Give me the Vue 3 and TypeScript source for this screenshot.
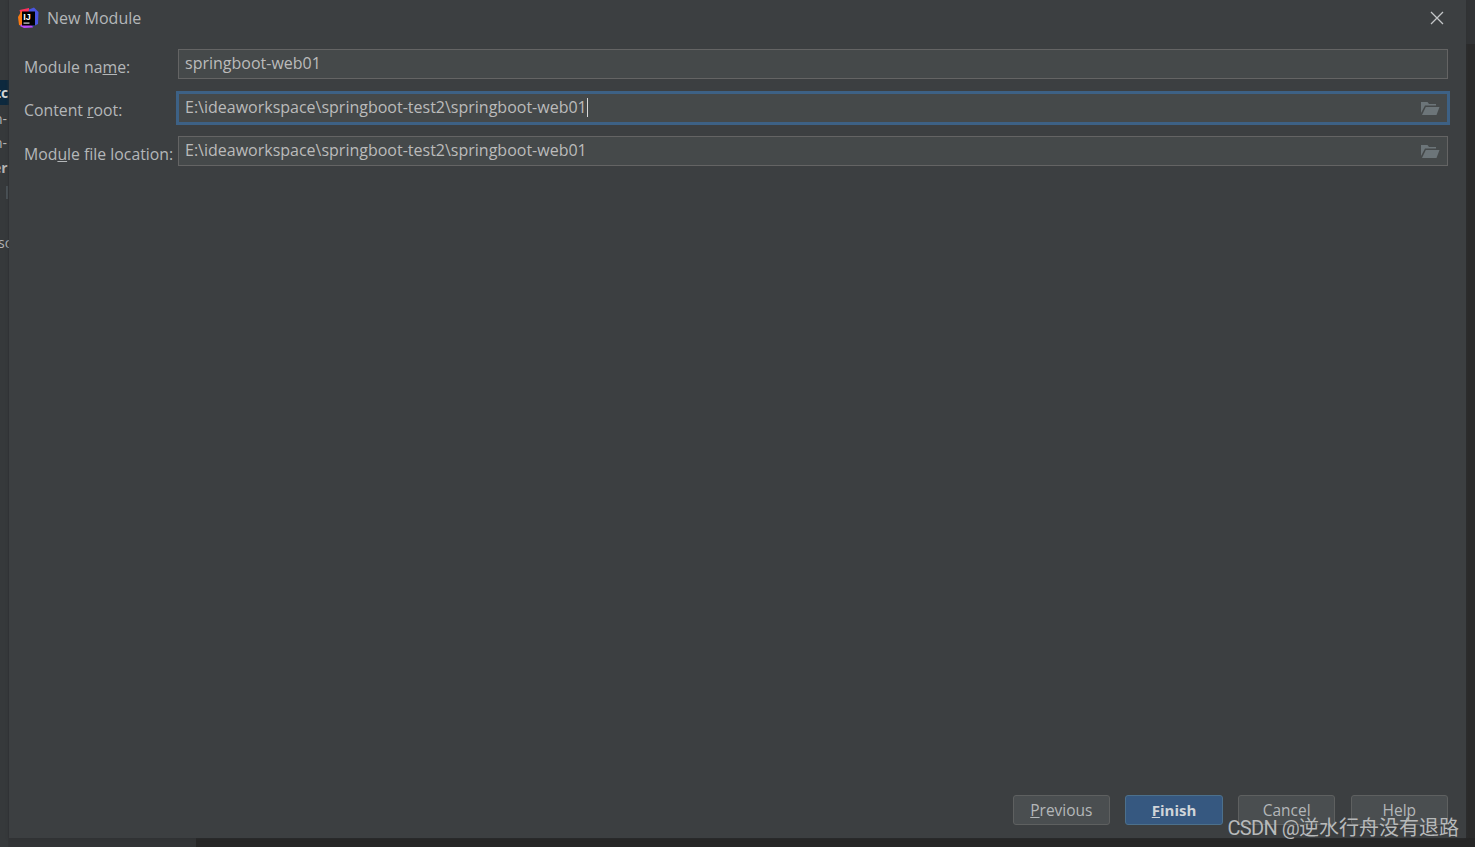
<template>
  <div class="screen">
    <!-- IDE window peeking out behind the dialog -->
    <div class="side-left">
      <div class="peek-selected">tc</div>
      <div class="peek peek-a">n-</div>
      <div class="peek peek-b">n-</div>
      <div class="peek peek-c">er</div>
      <div class="peek-tick"></div>
      <div class="peek peek-d">sc</div>
    </div>

    <div class="middle">
      <section class="dialog">
        <header class="title-bar">
          <svg class="app-logo" width="22" height="22" viewBox="0 0 22 22">
            <path d="M2.500 3 L12 1 L12 9 L5 12 Z" fill="#fe315d" />
            <path d="M1 10 L4.500 4 L9 8 L5 19 L2 18 Z" fill="#f97a12" />
            <path d="M12 2.5 L17 0.500 L21.500 5 L21 17 L15 20 L10 12 Z" fill="#4a55e0" />
            <path d="M3 19 L10 12 L16 20.500 L7 21 Z" fill="#b74af7" />
            <rect x="5" y="4.500" width="13" height="14" fill="#000" />
            <rect x="6.500" y="15.500" width="6" height="1.200" fill="#d8d8d8" />
            <text x="6.300" y="12.500" class="logo-text">IJ</text>
          </svg>
          <span class="title">New Module</span>
          <button class="close" aria-label="Close">
            <svg width="14" height="14" viewBox="0 0 14 14">
              <path d="M1 1 L13 13 M13 1 L1 13" stroke="#c4c6c8" stroke-width="1.300" fill="none" />
            </svg>
          </button>
        </header>

        <form class="fields" @submit.prevent>
          <div v-for="field in fields" :key="field.id" class="row" :class="field.id">
            <label class="label">
              {{ field.before }}<u>{{ field.mnemonic }}</u>{{ field.after }}
            </label>
            <div class="input" :class="{ focused: field.focused }">
              <span class="value">{{ field.value }}</span>
              <span v-if="field.focused" class="caret"></span>
              <svg v-if="field.browse" class="folder" width="20" height="16" viewBox="0 0 20 16">
                <path d="M1 13 V2 H7.500 L9 4 H16 V5.500 H5 L1 13 Z" fill="#6c7579" />
                <path d="M2 15 L5.800 7 H19.500 L16.500 15 Z" fill="#6c7579" />
              </svg>
            </div>
          </div>
        </form>

        <footer class="buttons">
          <button class="btn">
            <u>P</u>revious
          </button>
          <button class="btn primary">
            <u>F</u>inish
          </button>
          <button class="btn">Cancel</button>
          <button class="btn">Help</button>
        </footer>
      </section>

      <div class="side-right">
        <div class="side-right-top"></div>
      </div>
    </div>

    <div class="bottom-strip">
      <div class="bottom-light"></div>
    </div>

    <div class="watermark"><span class="mark-latin">CSDN @</span>逆水行舟没有退路</div>
  </div>
</template>

<script setup lang="ts">
type Field = {
  id: string;
  before: string;
  mnemonic: string;
  after: string;
  value: string;
  focused?: boolean;
  browse?: boolean;
};

const fields: Field[] = [
  {
    id: "name",
    before: "Module na",
    mnemonic: "m",
    after: "e:",
    value: "springboot-web01",
  },
  {
    id: "root",
    before: "Content ",
    mnemonic: "r",
    after: "oot:",
    value: "E:\\ideaworkspace\\springboot-test2\\springboot-web01",
    focused: true,
    browse: true,
  },
  {
    id: "file",
    before: "Mod",
    mnemonic: "u",
    after: "le file location:",
    value: "E:\\ideaworkspace\\springboot-test2\\springboot-web01",
    browse: true,
  },
];
</script>

<style>
html,
body {
  margin: 0;
  background: #333537;
  overflow: hidden;
}
</style>

<style scoped>
.screen {
  position: relative;
  display: grid;
  grid-template-columns: 9px 1fr;
  grid-template-rows: 838px 9px;
  width: 1475px;
  height: 847px;
  overflow: hidden;
  font-family: "Open Sans", "Noto Sans", sans-serif;
  color: #bbbbbb;
}

.side-left {
  grid-row: 1 / 3;
  background: #36393b;
  overflow: hidden;
  font-size: 14px;
  line-height: 18px;
  white-space: nowrap;
  box-shadow: inset -1px 0 0 #333537;
}

.peek-selected {
  margin-top: 80px;
  height: 25px;
  padding-top: 4px;
  box-sizing: border-box;
  background: #0d293e;
  color: #d6d6d6;
  font-weight: 700;
  text-indent: -5px;
}

.peek {
  color: #b4b4b4;
  text-indent: -6px;
  height: 18px;
}

.peek-a {
  margin-top: 5px;
}

.peek-b {
  margin-top: 6px;
}

.peek-c {
  margin-top: 7px;
  font-weight: 700;
  text-indent: -7px;
}

.peek-tick {
  width: 2px;
  height: 13px;
  margin: 9px 0 0 6px;
  background: #4b5358;
}

.peek-d {
  margin-top: 35px;
  text-indent: -2px;
}

.middle {
  display: flex;
  min-width: 0;
}

.dialog {
  position: relative;
  display: flex;
  flex-direction: column;
  flex: 1;
  min-width: 0;
  background: #3c3f41;
  box-shadow: 0 0 3px #2f3133;
}

.side-right {
  width: 9px;
  background: #2b2b2b;
}

.side-right-top {
  height: 44px;
  background: #323436;
}

.title-bar {
  display: flex;
  align-items: center;
  height: 36px;
  padding-left: 8px;
}

.app-logo {
  flex: none;
  margin-right: 8px;
}

.logo-text {
  font-family: "Liberation Sans", sans-serif;
  font-size: 9px;
  font-weight: 700;
  fill: #fff;
}

.title {
  font-size: 16px;
  color: #b4b7b9;
}

.close {
  display: flex;
  margin-left: auto;
  margin-right: 22px;
  padding: 0;
  border: 0;
  background: none;
}

.fields {
  display: flex;
  flex-direction: column;
  padding: 13px 18px 0 15px;
  gap: 14px;
}

.row {
  display: grid;
  grid-template-columns: 154px 1fr;
  align-items: center;
  height: 30px;
}

.row.file {
  margin-top: -1px;
}

.label {
  font-size: 15.8px;
  padding-top: 5px;
  color: #b4b7b9;
  white-space: nowrap;
}

.row.root .label {
  padding-top: 4px;
}

.input {
  position: relative;
  display: flex;
  align-items: center;
  height: 30px;
  box-sizing: border-box;
  padding: 0 6px 2px;
  background: #45494a;
  border: 1px solid #646464;
  font-size: 16px;
  color: #bbbbbb;
}

.input.focused {
  outline: 3px solid #3d6185;
  outline-offset: -1px;
  border-color: #45494a;
}

.caret {
  width: 1px;
  height: 19px;
  background: #d8d8d8;
}

.folder {
  position: absolute;
  right: 7px;
  top: 6px;
}

.buttons {
  display: flex;
  justify-content: flex-end;
  gap: 15.33px;
  margin-top: auto;
  padding: 0 18px 13px 0;
}

.btn {
  width: 97.33px;
  height: 30px;
  padding: 0;
  font: inherit;
  font-size: 15.5px;
  color: #b4b7b9;
  background: #4a4e50;
  border: 1px solid #5e6060;
  border-radius: 3px;
}

.btn.primary {
  background: #365880;
  border-color: #4c708c;
  color: #d0d5d9;
  font-size: 15px;
  font-weight: 700;
}

.bottom-strip {
  background: #262626;
}

.bottom-light {
  width: 187px;
  height: 100%;
  background: #323436;
}

.watermark {
  position: absolute;
  right: 16px;
  bottom: 7px;
  font-family: "Roboto", "Noto Sans CJK SC", sans-serif;
  font-size: 20px;
  line-height: 24px;
  color: #b7b9ba;
  white-space: nowrap;
}

.mark-latin {
  letter-spacing: -0.6px;
}
</style>
